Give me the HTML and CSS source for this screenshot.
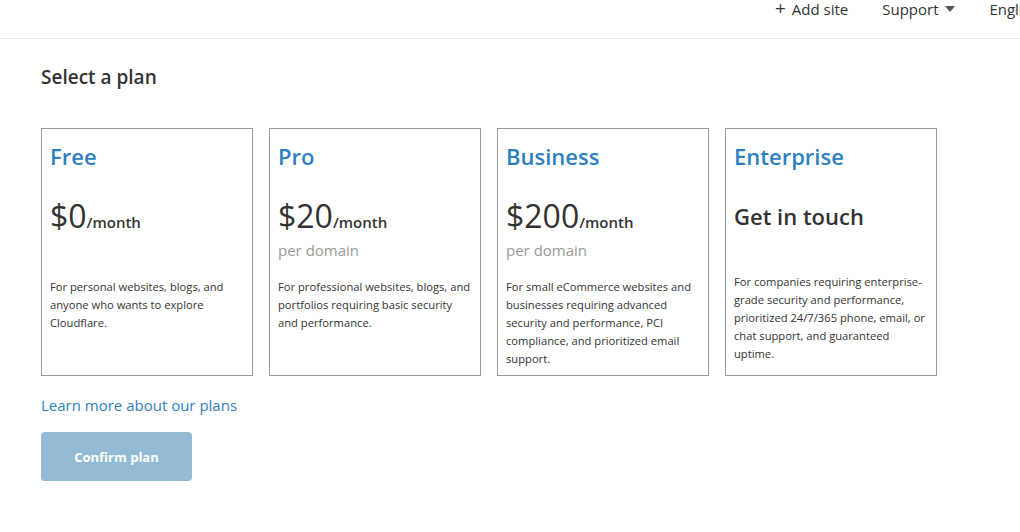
FILE: index.html
```html
<!DOCTYPE html>
<html>
  <head>
    <title>Select a plan</title>
    <link rel="stylesheet" href="styles.css">
  </head>
  <body>
    <div class="top-bar">
      <span class="nav-item"><span class="plus">+</span> Add site</span>
      <span class="nav-item">Support <span class="caret"></span></span>
      <span class="nav-item">English</span>
    </div>

    <div class="content">
      <p class="title">Select a plan</p>

      <div class="plans">
        <div class="plan">
          <p class="plan-name">Free</p>
          <p class="price">$0<span class="per">/month</span></p>
          <p class="desc free-desc">For personal websites, blogs, and anyone who wants to explore Cloudflare.</p>
        </div>
        <div class="plan">
          <p class="plan-name">Pro</p>
          <p class="price">$20<span class="per">/month</span></p>
          <p class="domain">per domain</p>
          <p class="desc">For professional websites, blogs, and portfolios requiring basic security and performance.</p>
        </div>
        <div class="plan">
          <p class="plan-name">Business</p>
          <p class="price">$200<span class="per">/month</span></p>
          <p class="domain">per domain</p>
          <p class="desc">For small eCommerce websites and businesses requiring advanced security and performance, PCI compliance, and prioritized email support.</p>
        </div>
        <div class="plan">
          <p class="plan-name">Enterprise</p>
          <p class="touch">Get in touch</p>
          <p class="desc enterprise-desc">For companies requiring enterprise-grade security and performance, prioritized 24/7/365 phone, email, or chat support, and guaranteed uptime.</p>
        </div>
      </div>

      <a class="learn-more">Learn more about our plans</a>

      <button class="confirm-button">Confirm plan</button>
    </div>
  </body>
</html>
```

FILE: styles.css
```css
body{
  margin: 0;
  font-family: "Open Sans", Arial, sans-serif;
  color: #333;
  background-color: white;
  overflow: hidden;
}

p{
  margin: 0;
}

.top-bar{
  height: 38px;
  border-bottom: 1px solid #ebebeb;
  display: flex;
  justify-content: flex-end;
  align-items: flex-start;
  gap: 34px;
  margin-right: -19px;
  font-size: 15px;
  white-space: nowrap;
}

.nav-item{
  line-height: 19px;
  color: #333;
}

.plus{
  display: inline-block;
  font-size: 19px;
  line-height: 15px;
  margin-right: 2px;
}

.caret{
  display: inline-block;
  width: 0;
  height: 0;
  border-left: 5px solid transparent;
  border-right: 5px solid transparent;
  border-top: 6px solid #555;
  vertical-align: middle;
  margin-left: 3px;
  margin-bottom: 3px;
}

.content{
  padding-left: 41px;
}

.title{
  font-size: 19px;
  font-weight: 600;
  margin-top: 25px;
  line-height: 26px;
}

.plans{
  display: flex;
  gap: 16px;
  margin-top: 38px;
}

.plan{
  width: 196px;
  height: 246px;
  border: 1px solid #999;
  padding: 0 6px 0 8px;
}

.plan-name{
  color: #2f80c0;
  font-size: 22px;
  font-weight: 600;
  margin-top: 12px;
  line-height: 30px;
}

.price{
  font-size: 32px;
  margin-top: 27px;
  line-height: 36px;
  color: #333;
}

.per{
  font-size: 15px;
  font-weight: 600;
}

.domain{
  color: #999;
  font-size: 15px;
  line-height: 22px;
  margin-top: -1px;
}

.desc{
  font-size: 11.2px;
  line-height: 18px;
  margin-top: 17px;
}

.free-desc{
  margin-top: 38px;
}

.touch{
  font-size: 22px;
  font-weight: 600;
  margin-top: 30px;
  line-height: 30px;
}

.enterprise-desc{
  margin-top: 42px;
}

.learn-more{
  display: block;
  color: #2f80c0;
  font-size: 15px;
  margin-top: 19px;
  line-height: 20px;
}

.confirm-button{
  margin-top: 17px;
  width: 151px;
  height: 49px;
  border: none;
  border-radius: 4px;
  background-color: #94bbd6;
  color: white;
  font-family: "Open Sans", Arial, sans-serif;
  font-weight: 700;
  font-size: 13px;
}
```
